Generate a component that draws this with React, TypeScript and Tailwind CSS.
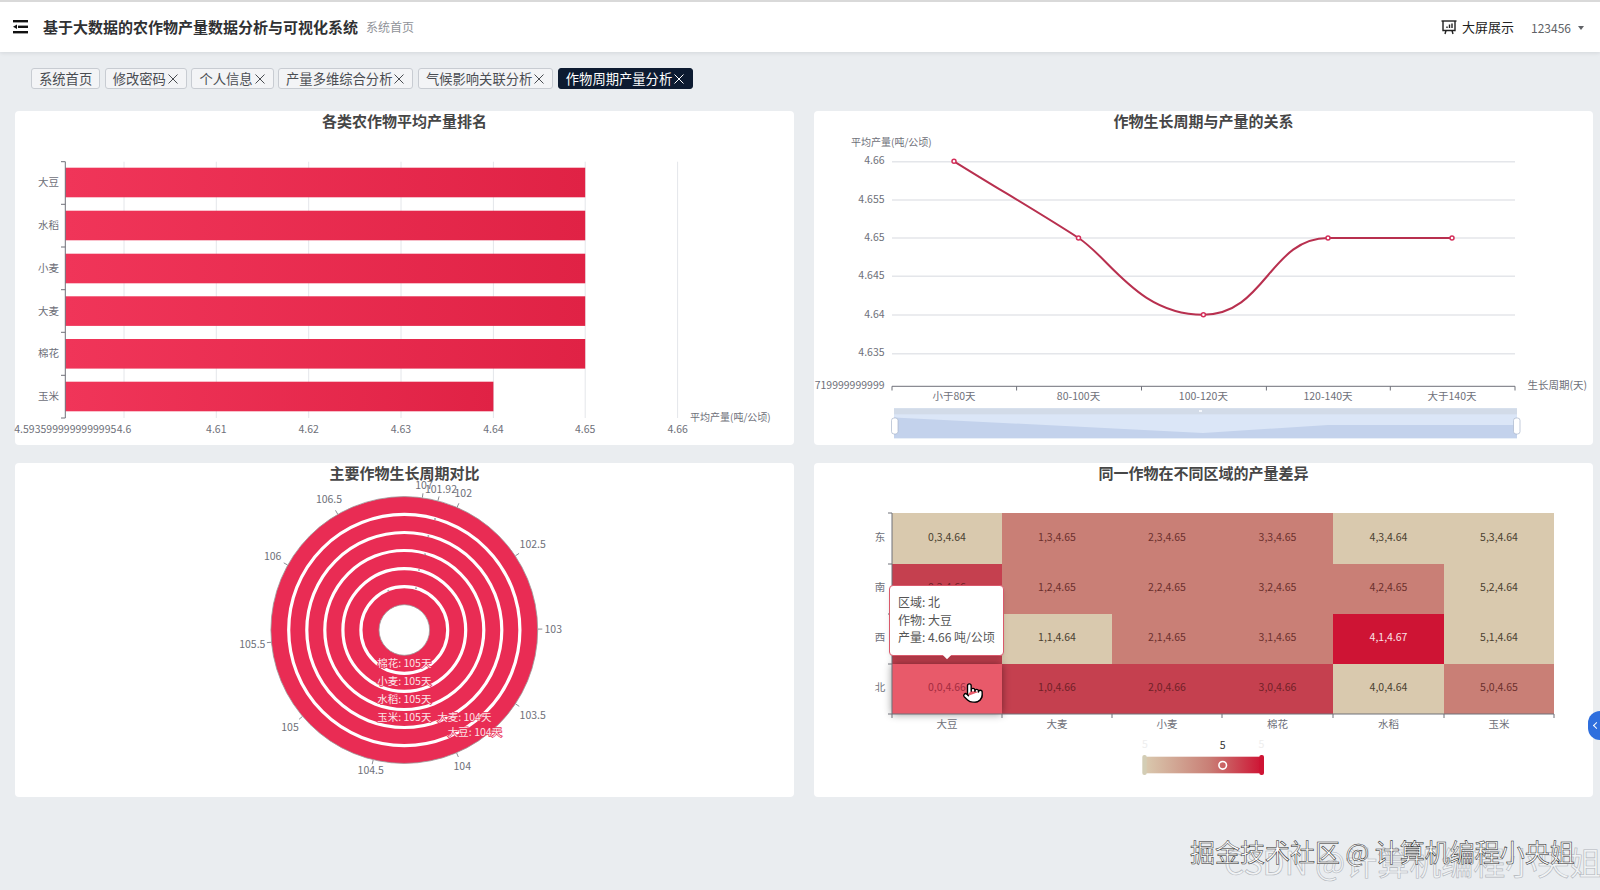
import { Pointer } from "lucide-react";

const axisColor = "#6e7079";
const gridColor = "#e4e6ea";

const tabs = ["系统首页", "修改密码", "个人信息", "产量多维综合分析", "气候影响关联分析", "作物周期产量分析"];

function Label({ x, y, children, anchor = "middle", fill = axisColor, size = 10.5 }: { x: number; y: number; children: React.ReactNode; anchor?: "start" | "middle" | "end"; fill?: string; size?: number }) {
  return (
    <text x={x} y={y - 1} textAnchor={anchor} dominantBaseline="central" fill={fill} fontSize={size}>
      {children}
    </text>
  );
}

function Panel({ title, children }: { title: string; children: React.ReactNode }) {
  return (
    <div className="relative h-[334px] w-[779px] bg-white rounded-sm">
      <div className="h-[22px] text-center text-[15px] leading-[20px] font-bold text-[#464646]">{title}</div>
      {children}
    </div>
  );
}

function BarChart() {
  const bars = [
    { name: "大豆", y: 167.7, x2: 585.2 },
    { name: "水稻", y: 210.7, x2: 585.2 },
    { name: "小麦", y: 253.7, x2: 585.2 },
    { name: "大麦", y: 296.3, x2: 585.2 },
    { name: "棉花", y: 339, x2: 585.2 },
    { name: "玉米", y: 381.7, x2: 493.4 },
  ];
  const grid = [124, 216.3, 308.7, 401, 493.4, 585.2, 677.6];
  const ticks = [161.7, 204.3, 247, 289.7, 332.3, 375.3, 418];
  const xLabels = ["4.6", "4.61", "4.62", "4.63", "4.64", "4.65", "4.66"];
  return (
    <svg viewBox="15 133 779 312" className="block h-[312px] w-[779px] overflow-visible">
      <defs>
        <linearGradient id="barFill" x1="0" y1="0" x2="1" y2="0">
          <stop offset="0" stopColor="#f03559" />
          <stop offset="1" stopColor="#e02245" />
        </linearGradient>
      </defs>
      {grid.map((x) => (
        <line key={x} x1={x} x2={x} y1={161.7} y2={418} stroke={gridColor} />
      ))}
      {bars.map((b) => (
        <g key={b.name}>
          <rect x={65.3} y={b.y} width={b.x2 - 65.3} height={29.6} fill="url(#barFill)" />
          <Label x={59} y={b.y + 14.8} anchor="end">{b.name}</Label>
        </g>
      ))}
      <line x1={65.3} x2={65.3} y1={161.7} y2={418} stroke={axisColor} />
      {ticks.map((y) => (
        <line key={y} x1={61} x2={65.3} y1={y} y2={y} stroke={axisColor} />
      ))}
      <Label x={65.3} y={429}>4.5935999999999995</Label>
      {grid.map((x, i) => (
        <Label key={x} x={x} y={429}>{xLabels[i]}</Label>
      ))}
      <Label x={690} y={417.7} anchor="start" size={10}>平均产量(吨/公顷)</Label>
    </svg>
  );
}

function LineChart() {
  const rows = [
    { y: 161.7, t: "4.66" },
    { y: 200, t: "4.655" },
    { y: 238, t: "4.65" },
    { y: 276.3, t: "4.645" },
    { y: 315, t: "4.64" },
    { y: 353.7, t: "4.635" },
  ];
  const points = [
    [954, 161.3],
    [1078.5, 238],
    [1203.4, 314.7],
    [1328, 238],
    [1452, 238],
  ];
  const cats = ["小于80天", "80-100天", "100-120天", "120-140天", "大于140天"];
  return (
    <svg viewBox="814 133 779 312" className="block h-[312px] w-[779px] overflow-visible">
      <Label x={851} y={142} anchor="start" size={10}>平均产量(吨/公顷)</Label>
      {rows.map((r) => (
        <g key={r.t}>
          <line x1={892} x2={1515} y1={r.y} y2={r.y} stroke={gridColor} strokeWidth={1.4} />
          <Label x={884.6} y={r.y - 1} anchor="end">{r.t}</Label>
        </g>
      ))}
      <Label x={884.6} y={385} anchor="end">719999999999</Label>
      <line x1={892} x2={1515} y1={386.3} y2={386.3} stroke={axisColor} />
      {[892, 1016.6, 1141.5, 1266.4, 1390.3, 1515].map((x) => (
        <line key={x} x1={x} x2={x} y1={386.3} y2={390.5} stroke={axisColor} />
      ))}
      {cats.map((c, i) => (
        <Label key={c} x={points[i][0]} y={396.7}>{c}</Label>
      ))}
      <Label x={1527.4} y={385} anchor="start">生长周期(天)</Label>
      <path
        d="M954 161.3 C995 187 1040 213 1078.5 238 C1110 258 1138 314.7 1203.4 314.7 C1265 314.7 1270 238 1328 238 L1452 238"
        fill="none"
        stroke="#b8304f"
        strokeWidth={2}
      />
      {points.map(([x, y]) => (
        <circle key={x} cx={x} cy={y} r={2} fill="#fff" stroke="#d42f5a" strokeWidth={1.5} />
      ))}
      {/* data zoom */}
      <rect x={894} y={408.3} width={623} height={30} fill="#dbe6f7" />
      <rect x={894} y={408.3} width={623} height={6} fill="#d2dbe8" />
      <path d="M894 417.5 L1203 433 L1328 425 L1517 425 L1517 438.3 L894 438.3 Z" fill="#c3d2ec" />
      <rect x={1199} y={410} width={3} height={2} fill="#f4f7fc" />
      <rect x={891.5} y={418} width={6.5} height={16} rx={2.5} fill="#fff" stroke="#a9b6cc" strokeWidth={0.7} />
      <rect x={1513.5} y={418} width={6.5} height={16} rx={2.5} fill="#fff" stroke="#a9b6cc" strokeWidth={0.7} />
    </svg>
  );
}

function RadialChart() {
  const cx = 404.3;
  const cy = 630;
  const angleLabels = [
    { t: "106.5", x: 329, y: 499 },
    { t: "107", x: 424, y: 485.7 },
    { t: "101.92", x: 441, y: 489 },
    { t: "102", x: 463.3, y: 493 },
    { t: "102.5", x: 532.7, y: 544.3 },
    { t: "103", x: 553.3, y: 629 },
    { t: "103.5", x: 532.7, y: 715.3 },
    { t: "104", x: 462.3, y: 766.3 },
    { t: "104.5", x: 370.7, y: 770.3 },
    { t: "105", x: 290, y: 727 },
    { t: "105.5", x: 252.3, y: 644 },
    { t: "106", x: 272.7, y: 556.7 },
  ];
  const ringLabels = [
    { t: "棉花: 105天", x: 404.3, y: 662.3 },
    { t: "小麦: 105天", x: 404.3, y: 680 },
    { t: "水稻: 105天", x: 404.3, y: 698.3 },
    { t: "玉米: 105天", x: 404.3, y: 716.7 },
    { t: "大麦: 104天", x: 464.3, y: 716 },
    { t: "大豆: 104天", x: 475, y: 731.3 },
  ];
  const ringMarks = [
    [435, 519],
    [428.3, 536],
    [425, 554.3],
    [419, 570],
    [416, 588.3],
    [388.3, 590.7],
  ];
  return (
    <svg viewBox="15 485 779 312" className="block h-[312px] w-[779px] overflow-visible">
      <circle cx={cx} cy={cy} r={133.4} fill="#e92c54" stroke="#9b9b9b" strokeWidth={0.8} />
      {[115.6, 97.5, 79.5, 61.4, 43.4].map((r) => (
        <circle key={r} cx={cx} cy={cy} r={r} fill="none" stroke="#fff" strokeWidth={3.2} />
      ))}
      <circle cx={cx} cy={cy} r={25.3} fill="#fff" stroke="#9b9b9b" strokeWidth={0.8} />
      {ringMarks.map(([x, y]) => (
        <circle key={x} cx={x} cy={y} r={1} fill="#a8a8a8" />
      ))}
      {angleLabels.map((a) => {
        const d = Math.hypot(a.x - cx, a.y - cy);
        const ux = (a.x - cx) / d;
        const uy = (a.y - cy) / d;
        return (
          <g key={a.t}>
            <line x1={cx + ux * 133.7} y1={cy + uy * 133.7} x2={cx + ux * 138} y2={cy + uy * 138} stroke={axisColor} strokeWidth={0.8} />
            <Label x={a.x} y={a.y}>{a.t}</Label>
          </g>
        );
      })}
      {ringLabels.map((l) => (
        <text
          key={l.t}
          x={l.x}
          y={l.y}
          textAnchor="middle"
          dominantBaseline="central"
          fontSize={10.5}
          fill="#fbe3e7"
          stroke="#e92c54"
          strokeWidth={1.5}
          paintOrder="stroke"
        >
          {l.t}
        </text>
      ))}
    </svg>
  );
}

function heatColor(v: string) {
  if (v === "4.64") return { bg: "#d9c9ae", text: "#4a4030" };
  if (v === "4.65") return { bg: "#c97f76", text: "#6b2f2d" };
  if (v === "4.66") return { bg: "#c5404f", text: "#702028" };
  return { bg: "#ce1434", text: "#fbe3e7" };
}

function HeatMap() {
  const colX = [892, 1002, 1112, 1222, 1333, 1444, 1554];
  const rowY = [513, 564, 614, 664, 714];
  const labelY = [537.7, 587.5, 637.5, 687.7];
  const crops = ["大豆", "大麦", "小麦", "棉花", "水稻", "玉米"];
  const rows = [
    { name: "东", idx: 3, vals: ["4.64", "4.65", "4.65", "4.65", "4.64", "4.64"] },
    { name: "南", idx: 2, vals: ["4.66", "4.65", "4.65", "4.65", "4.65", "4.64"] },
    { name: "西", idx: 1, vals: ["4.66", "4.64", "4.65", "4.65", "4.67", "4.64"] },
    { name: "北", idx: 0, vals: ["4.66", "4.66", "4.66", "4.66", "4.64", "4.65"] },
  ];
  return (
    <svg viewBox="814 485 779 312" className="block h-[312px] w-[779px] overflow-visible">
      <defs>
        <linearGradient id="heatScale" x1="0" y1="0" x2="1" y2="0">
          <stop offset="0" stopColor="#d9c9ae" />
          <stop offset="0.55" stopColor="#c97f76" />
          <stop offset="1" stopColor="#ce1434" />
        </linearGradient>
        <filter id="cellShadow" x="-20%" y="-30%" width="140%" height="160%">
          <feDropShadow dx="0" dy="0" stdDeviation="4" floodColor="#000" floodOpacity="0.45" />
        </filter>
      </defs>
      {rows.map((r, ri) => (
        <g key={r.name}>
          {r.vals.map((v, ci) => (
            <rect key={ci} x={colX[ci]} y={rowY[ri]} width={colX[ci + 1] - colX[ci]} height={rowY[ri + 1] - rowY[ri]} fill={heatColor(v).bg} shapeRendering="crispEdges" />
          ))}
          {r.vals.map((v, ci) => (
            <Label key={ci} x={(colX[ci] + colX[ci + 1]) / 2} y={labelY[ri]} fill={heatColor(v).text}>
              {ci},{r.idx},{v}
            </Label>
          ))}
          <Label x={880} y={labelY[ri]}>{r.name}</Label>
        </g>
      ))}
      {/* hovered cell */}
      <rect x={892} y={664} width={110} height={50} fill="#e85a6b" filter="url(#cellShadow)" />
      <Label x={947} y={687.7} fill="#a32c40">0,0,4.66</Label>
      <line x1={892} x2={892} y1={513} y2={714} stroke={axisColor} />
      <line x1={892} x2={1554} y1={714} y2={714} stroke={axisColor} />
      {rowY.map((y) => (
        <line key={y} x1={888} x2={892} y1={y} y2={y} stroke={axisColor} />
      ))}
      {colX.map((x) => (
        <line key={x} x1={x} x2={x} y1={714} y2={718} stroke={axisColor} />
      ))}
      {crops.map((c, i) => (
        <Label key={c} x={(colX[i] + colX[i + 1]) / 2} y={724}>{c}</Label>
      ))}
      {/* visual map */}
      <rect x={1145} y={756.7} width={116.7} height={16.6} fill="url(#heatScale)" />
      <rect x={1142.3} y={755} width={4.4} height={20} rx={2} fill="#d3cdb5" />
      <rect x={1259.3} y={755} width={4.7} height={20} rx={2} fill="#ce1434" />
      <circle cx={1222.7} cy={765.3} r={3.8} fill="none" stroke="#fff" strokeWidth={1.6} />
      <Label x={1222.7} y={745.7} fill="#333">5</Label>
      <Label x={1145} y={744} fill="#eeeeee">5</Label>
      <Label x={1261.5} y={744} fill="#eeeeee">5</Label>
    </svg>
  );
}

export default function App() {
  return (
    <div className="relative h-[890px] w-full overflow-hidden bg-[#eaedf0] [font-family:'Noto_Sans_CJK_SC','Noto_Sans',sans-serif]">
      {/* Header */}
      <header className="flex h-[52px] items-center justify-between border-t-2 border-[#d9d9d9] bg-white pl-[13px] pr-[16px] shadow-[0_1px_4px_rgba(0,21,41,0.1)]">
        <div className="flex items-center">
          <svg width="15" height="14" viewBox="0 0 15 14" className="mr-[15px]">
            <rect x="0" y="0" width="15" height="2.4" fill="#111" />
            <rect x="5" y="5.6" width="10" height="2.4" fill="#111" />
            <path d="M0 6.8 L4 4.6 L4 9 Z" fill="#111" />
            <rect x="0" y="11" width="15" height="2.4" fill="#111" />
          </svg>
          <span className="text-[15px] font-bold text-[#303133]">基于大数据的农作物产量数据分析与可视化系统</span>
          <span className="ml-2 text-xs text-[#909399]">系统首页</span>
        </div>
        <div className="flex items-center">
          <svg width="16" height="15" viewBox="0 0 16 15" fill="none" stroke="#222" strokeWidth="1.4" className="mr-[5px]">
            <path d="M0.5 1 H15.5" />
            <path d="M2 1 V10.5 H14 V1" />
            <path d="M5 10.5 L4 14 M11 10.5 L12 14" />
            <path d="M6 8 V6.5 M8.5 8 V4.5 M11 8 V3.5" />
          </svg>
          <span className="text-[13px] text-[#222]">大屏展示</span>
          <span className="ml-[17px] mt-[2px] text-xs text-[#606266]">123456</span>
          <span className="ml-[7px] mt-[1px] h-0 w-0 border-x-[3px] border-t-[4px] border-x-transparent border-t-[#606266]" />
        </div>
      </header>

      {/* Tabs */}
      <div className="flex gap-[4.5px] pl-[31px] pt-[16px]">
        {tabs.map((t, i) => (
          <div
            key={t}
            className={
              i === tabs.length - 1
                ? "flex h-[21px] items-center gap-[1px] rounded-[3px] border border-[#0d1b31] bg-[#0d1b31] px-[7px] text-[13.3px] text-white"
                : "flex h-[21px] items-center gap-[1px] rounded-[3px] border border-[#c8ccd2] bg-[#f3f4f6] px-[7px] text-[13.3px] text-[#4a4d52]"
            }
          >
            {t}
            {i > 0 && (
              <svg width="12" height="12" viewBox="0 0 12 12" stroke="currentColor" strokeWidth="1">
                <path d="M1.5 1.5 L10.5 10.5 M10.5 1.5 L1.5 10.5" />
              </svg>
            )}
          </div>
        ))}
      </div>

      {/* Charts */}
      <div className="mt-[22px] grid grid-cols-[779px_779px] gap-x-5 gap-y-[18px] pl-[15px]">
        <Panel title="各类农作物平均产量排名">
          <BarChart />
        </Panel>
        <Panel title="作物生长周期与产量的关系">
          <LineChart />
        </Panel>
        <Panel title="主要作物生长周期对比">
          <RadialChart />
        </Panel>
        <Panel title="同一作物在不同区域的产量差异">
          <HeatMap />
          <div className="absolute left-[75px] top-[122px] h-[71px] w-[115px] rounded border border-[#d9596b] bg-white pl-2 pt-[7px] text-xs leading-[17.5px] text-[#555] shadow-md">
            <div>区域: 北</div>
            <div>作物: 大豆</div>
            <div className="whitespace-nowrap">产量: 4.66 吨/公顷</div>
            <span className="absolute -bottom-[3px] left-[54px] h-[6px] w-[6px] rotate-45 bg-white" />
          </div>
          <Pointer size={22} fill="#fff" strokeWidth={1.5} className="absolute left-[148px] top-[219px] text-black" />
        </Panel>
      </div>

      {/* side button */}
      <div className="absolute left-[1588px] top-[711px] flex h-[29px] w-[12px] items-center justify-end rounded-l-full bg-[#2f6fde]">
        <span className="mr-[1px] h-[5px] w-[5px] rotate-45 border-b border-l border-white" />
      </div>

      {/* Watermarks */}
      <div className="absolute left-[1224px] top-[836px] whitespace-nowrap text-[32px] leading-[50px] text-white/40 [-webkit-text-stroke:0.6px_#b0b4ba]">
        CSDN @计算机编程小央姐
      </div>
      <div className="absolute left-[1190px] top-[833px] whitespace-nowrap text-[25px] leading-[36px] text-white [-webkit-text-stroke:0.5px_#222]">
        掘金技术社区 @ 计算机编程小央姐
      </div>
    </div>
  );
}
